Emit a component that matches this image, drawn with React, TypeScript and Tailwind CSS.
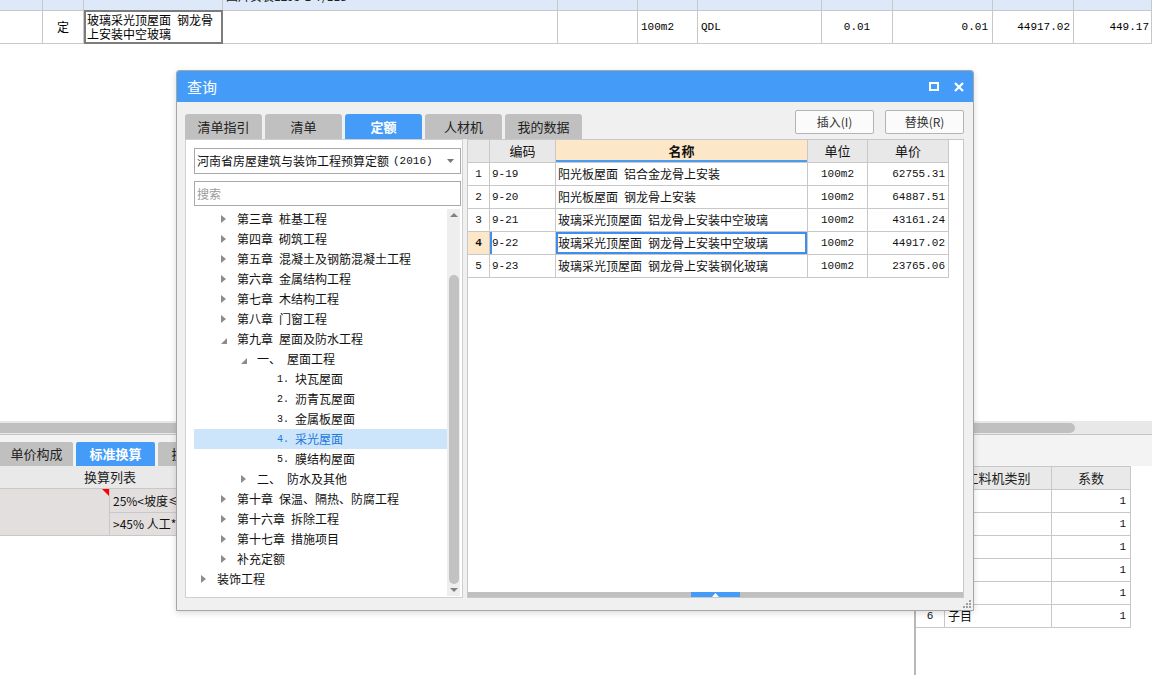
import type { ReactNode } from 'react';

const mono = "font-['Liberation_Mono','Noto_Sans_CJK_SC',monospace]";
const line = 'border-[#c8c8c8]';

function Spaced({ text }: { text: string }) {
  const parts = text.split(' ');
  return (
    <>
      {parts.map((p, i) => (
        <span key={i}>
          {i > 0 && <span className="inline-block w-[6px]" />}
          {p}
        </span>
      ))}
    </>
  );
}

type TreeNode = {
  level: number;
  state?: 'open' | 'closed';
  num?: string;
  text: string;
  selected?: boolean;
};

const tree: TreeNode[] = [
  { level: 1, state: 'closed', text: '第三章 桩基工程' },
  { level: 1, state: 'closed', text: '第四章 砌筑工程' },
  { level: 1, state: 'closed', text: '第五章 混凝土及钢筋混凝土工程' },
  { level: 1, state: 'closed', text: '第六章 金属结构工程' },
  { level: 1, state: 'closed', text: '第七章 木结构工程' },
  { level: 1, state: 'closed', text: '第八章 门窗工程' },
  { level: 1, state: 'open', text: '第九章 屋面及防水工程' },
  { level: 2, state: 'open', text: '一、 屋面工程' },
  { level: 3, num: '1.', text: '块瓦屋面' },
  { level: 3, num: '2.', text: '沥青瓦屋面' },
  { level: 3, num: '3.', text: '金属板屋面' },
  { level: 3, num: '4.', text: '采光屋面', selected: true },
  { level: 3, num: '5.', text: '膜结构屋面' },
  { level: 2, state: 'closed', text: '二、 防水及其他' },
  { level: 1, state: 'closed', text: '第十章 保温、隔热、防腐工程' },
  { level: 1, state: 'closed', text: '第十六章 拆除工程' },
  { level: 1, state: 'closed', text: '第十七章 措施项目' },
  { level: 1, state: 'closed', text: '补充定额' },
  { level: 0, state: 'closed', text: '装饰工程' },
];

const indent = ['w-[0px]', 'w-[20px]', 'w-[40px]', 'w-[60px]'];

const quotaRows = [
  { n: 1, code: '9-19', name: '阳光板屋面 铝合金龙骨上安装', unit: '100m2', price: '62755.31' },
  { n: 2, code: '9-20', name: '阳光板屋面 钢龙骨上安装', unit: '100m2', price: '64887.51' },
  { n: 3, code: '9-21', name: '玻璃采光顶屋面 铝龙骨上安装中空玻璃', unit: '100m2', price: '43161.24' },
  { n: 4, code: '9-22', name: '玻璃采光顶屋面 钢龙骨上安装中空玻璃', unit: '100m2', price: '44917.02', selected: true },
  { n: 5, code: '9-23', name: '玻璃采光顶屋面 钢龙骨上安装钢化玻璃', unit: '100m2', price: '23765.06' },
];

function Tri({ state }: { state?: 'open' | 'closed' }) {
  if (state === 'closed')
    return (
      <svg width="5" height="8" viewBox="0 0 5 8">
        <polygon points="0,0 5,4 0,8" fill="#8c8c8c" />
      </svg>
    );
  if (state === 'open')
    return (
      <svg width="6" height="6" viewBox="0 0 6 6" className="mt-[3px]">
        <polygon points="6,0 6,6 0,6" fill="#8c8c8c" />
      </svg>
    );
  return null;
}

function Cell({ className, children }: { className: string; children?: ReactNode }) {
  return <div className={`shrink-0 border-r ${line} flex items-center ${className}`}>{children}</div>;
}

function TopTable() {
  return (
    <div className="h-[421px]">
      <div className={`flex h-[11px] border-b ${line} bg-[#dde8f8] overflow-hidden`}>
        <Cell className="w-[43px]" />
        <Cell className="w-[41px]" />
        <Cell className="w-[139px]" />
        <div className={`w-[335px] border-r ${line} pl-[3px] overflow-hidden`}>
          <div className="-mt-[11px] leading-[14px] text-[12px] text-[#222] whitespace-nowrap">图片安装12J3-1-7/118</div>
        </div>
        <Cell className="w-[80px]" />
        <Cell className="w-[60px]" />
        <Cell className="w-[124px]" />
        <Cell className="w-[71px]" />
        <Cell className="w-[100px]" />
        <Cell className="w-[81px]" />
        <Cell className="w-[78px]" />
      </div>
      <div className={`flex h-[33px] border-b ${line} text-[12px] text-black`}>
        <Cell className="w-[43px]" />
        <Cell className="w-[41px] justify-center">定</Cell>
        <div className="shrink-0 w-[139px] border-2 border-[#7c7c7c] pl-[1px] leading-[14px] -mt-[1px] h-[34px] flex flex-col justify-center">
          <div>
            <Spaced text="玻璃采光顶屋面 钢龙骨" />
          </div>
          <div>上安装中空玻璃</div>
        </div>
        <Cell className="w-[335px]" />
        <Cell className="w-[80px]" />
        <Cell className={`w-[60px] pl-[3px] ${mono} text-[11px]`}>100m2</Cell>
        <Cell className={`w-[124px] pl-[3px] ${mono} text-[11px]`}>QDL</Cell>
        <Cell className={`w-[71px] justify-center ${mono} text-[11px]`}>0.01</Cell>
        <Cell className={`w-[100px] justify-end pr-[4px] ${mono} text-[11px]`}>0.01</Cell>
        <Cell className={`w-[81px] justify-end pr-[3px] ${mono} text-[11px]`}>44917.02</Cell>
        <Cell className={`w-[78px] justify-end pr-[2px] ${mono} text-[11px]`}>449.17</Cell>
      </div>
    </div>
  );
}

function BottomArea() {
  return (
    <div className="flex-1 flex flex-col">
      <div className="h-[14px] bg-[#e8e8e8] pt-[2px] border-b border-[#c4c4c4]">
        <div className="h-[10px] w-[1075px] rounded-r-[5px] bg-[#c0c0c0]" />
      </div>
      <div className="h-[31px] bg-[#f3f3f3] flex items-end gap-[3px] text-[13px]">
        <div className="w-[73px] h-[24px] bg-[#c0c0c0] rounded-tr-[2px] flex items-center justify-center text-[#222]">单价构成</div>
        <div className="w-[79px] h-[24px] bg-[#459cf8] rounded-t-[2px] flex items-center justify-center text-white font-bold">标准换算</div>
        <div className="w-[79px] h-[24px] bg-[#c0c0c0] rounded-t-[2px] flex items-center justify-center text-[#222]">换算信息</div>
      </div>
      <div className="flex-1 flex">
        <div className="w-[220px] shrink-0 text-[12px]">
          <div className={`h-[23px] bg-[#e9e9e9] border-b ${line} flex items-center justify-center text-[13px] text-[#222]`}>换算列表</div>
          <div className={`flex h-[47px] bg-[#e3dfde] border-b ${line}`}>
            <div className={`relative shrink-0 w-[110px] border-r ${line}`}>
              <svg width="7" height="7" viewBox="0 0 7 7" className="absolute right-0 top-0">
                <polygon points="0,0 7,0 7,7" fill="#ff0000" />
              </svg>
            </div>
            <div className="flex-1 min-w-0 flex flex-col">
              <div className={`h-[24px] border-b ${line} flex items-center pl-[3px] whitespace-nowrap overflow-hidden`}>25%&lt;坡度≤45% 人工*1.3</div>
              <div className="flex-1 flex items-center pl-[3px] whitespace-nowrap overflow-hidden">&gt;45% 人工*1.43</div>
            </div>
          </div>
        </div>
        <div className="flex-1" />
        <div className="w-[238px] shrink-0 border-l-2 border-[#b8b8b8] text-[12px]">
          <div className={`flex h-[24px] bg-[#e9e9e9] border-b border-t ${line} text-[13px] text-[#222] w-[215px]`}>
            <Cell className="w-[29px]" />
            <Cell className="w-[107px] justify-center">工料机类别</Cell>
            <Cell className="w-[79px] justify-center">系数</Cell>
          </div>
          {[1, 2, 3, 4, 5, 6].map((n) => (
            <div key={n} className={`flex h-[23px] border-b ${line} w-[215px] bg-white`}>
              <Cell className={`w-[29px] justify-center ${mono} text-[11px]`}>{n === 6 ? '6' : ''}</Cell>
              <Cell className="w-[107px] pl-[3px]">{n === 6 ? '子目' : ''}</Cell>
              <Cell className={`w-[79px] justify-end pr-[4px] ${mono} text-[11px]`}>1</Cell>
            </div>
          ))}
        </div>
      </div>
    </div>
  );
}

function QueryDialog() {
  const tabs = ['清单指引', '清单', '定额', '人材机', '我的数据'];
  return (
    <div className="absolute left-[176px] top-[70px] w-[798px] border border-[#a6a6a6] rounded-t-[3px] bg-[#f0f0f0] shadow-[0_2px_6px_rgba(0,0,0,0.15)]">
      {/* title */}
      <div className="h-[31px] bg-[#459cf8] rounded-t-[2px] flex items-center pl-[10px] pr-[9px] text-white">
        <span className="text-[15px] leading-none">查询</span>
        <div className="ml-auto flex items-center gap-[15px]">
          <svg width="10" height="9" viewBox="0 0 10 9">
            <rect x="1" y="1" width="8" height="7" fill="none" stroke="#fff" strokeWidth="2" />
          </svg>
          <svg width="10" height="10" viewBox="0 0 10 10">
            <path d="M1 1 L9 9 M9 1 L1 9" stroke="#fff" strokeWidth="2.2" />
          </svg>
        </div>
      </div>
      {/* tabs + buttons */}
      <div className="h-[37px] flex pl-[8px] pr-[9px]">
        <div className="flex gap-[3px] self-end">
          {tabs.map((t) => (
            <div
              key={t}
              className={
                t === '定额'
                  ? 'w-[77px] h-[25px] rounded-t-[3px] bg-[#459cf8] text-white font-bold text-[13px] flex items-center justify-center'
                  : 'w-[77px] h-[25px] rounded-t-[3px] bg-[#c0c0c0] text-[#222] text-[13px] flex items-center justify-center'
              }
            >
              {t}
            </div>
          ))}
        </div>
        <div className="ml-auto flex gap-[11px] mt-[8px] text-[12px] text-[#333]">
          <button className="w-[79px] h-[24px] bg-[#fbfbfb] border border-[#b4b4b4] rounded-[2px]">插入(I)</button>
          <button className="w-[79px] h-[24px] bg-[#fbfbfb] border border-[#b4b4b4] rounded-[2px]">替换(R)</button>
        </div>
      </div>
      {/* content */}
      <div className="flex gap-[4px] pl-[8px] pr-[9px] h-[459px]">
        {/* left */}
        <div className="w-[278px] shrink-0 bg-white border border-[#cfcfcf] pl-[8px] pt-[8px] flex flex-col">
          <div className="w-[267px] h-[26px] border border-[#a9a9a9] flex items-center pl-[2px] pr-[6px] text-[12px] text-[#111]">
            <span>河南省房屋建筑与装饰工程预算定额</span>
            <span className={`ml-[4px] ${mono} text-[11px]`}>(2016)</span>
            <svg width="7" height="4" viewBox="0 0 7 4" className="ml-auto">
              <polygon points="0,0 7,0 3.5,4" fill="#777" />
            </svg>
          </div>
          <div className="w-[267px] h-[25px] mt-[7px] border border-[#a9a9a9] flex items-center pl-[2px] text-[12px] text-[#9a9a9a]">搜索</div>
          <div className="mt-[3px] w-[266px] h-[387px] flex">
            <div className="flex-1 overflow-hidden text-[12px] text-[#111]">
              {tree.map((n, i) => (
                <div key={i} className={`h-[20px] flex items-center whitespace-nowrap ${n.selected ? 'bg-[#cce5fb] text-[#1a78e0]' : ''}`}>
                  <div className={indent[n.level]} />
                  <div className="w-[23px] pl-[7px] flex items-center">
                    <Tri state={n.state} />
                  </div>
                  {n.num && (
                    <>
                      <span className={`inline-block w-[12px] ${mono} text-[10px]`}>{n.num}</span>
                      <span className="inline-block w-[6px]" />
                    </>
                  )}
                  <Spaced text={n.text} />
                </div>
              ))}
            </div>
            <div className="w-[13px] bg-[#eeeeee] flex flex-col items-center">
              <svg width="8" height="4" viewBox="0 0 8 4" className="mt-[4px]">
                <polygon points="4,0 8,4 0,4" fill="#808080" />
              </svg>
              <div className="mt-[58px] w-[10px] h-[309px] rounded-[5px] bg-[#c2c2c2]" />
              <svg width="8" height="4" viewBox="0 0 8 4" className="mt-auto mb-[4px]">
                <polygon points="0,0 8,0 4,4" fill="#808080" />
              </svg>
            </div>
          </div>
        </div>
        {/* right */}
        <div className="w-[497px] shrink-0 bg-white border border-[#c8c8c8] flex flex-col">
          <div className="w-[481px] text-[12px] text-[#111]">
            <div className={`flex h-[23px] border-b ${line}`}>
              <Cell className="w-[22px] bg-[#e8e8e8]" />
              <Cell className="w-[66px] bg-[#e8e8e8] justify-center text-[13px]">编码</Cell>
              <div className="shrink-0 w-[252px] border-r border-[#c8c8c8] bg-[#fde7c9] shadow-[inset_0_-2px_0_#4a9cf0] flex items-center justify-center text-[13px] font-bold">名称</div>
              <Cell className="w-[60px] bg-[#e8e8e8] justify-center text-[13px]">单位</Cell>
              <Cell className="w-[81px] bg-[#e8e8e8] justify-center text-[13px]">单价</Cell>
            </div>
            {quotaRows.map((r) => (
              <div key={r.n} className={`flex h-[23px] border-b ${line}`}>
                <Cell className={`w-[22px] justify-center ${mono} text-[11px] ${r.selected ? 'bg-[#fde7c9] font-bold' : ''}`}>{r.n}</Cell>
                <Cell className={`w-[66px] pl-[2px] ${mono} text-[11px] ${r.selected ? 'shadow-[inset_2px_0_0_#3d8ef0]' : ''}`}>{r.code}</Cell>
                <Cell className={`w-[252px] pl-[2px] whitespace-nowrap ${r.selected ? 'shadow-[inset_0_0_0_2px_#3d8ef0]' : ''}`}>
                  <Spaced text={r.name} />
                </Cell>
                <Cell className={`w-[60px] justify-center ${mono} text-[11px]`}>{r.unit}</Cell>
                <Cell className={`w-[81px] justify-end pr-[3px] ${mono} text-[11px]`}>{r.price}</Cell>
              </div>
            ))}
          </div>
          <div className="mt-auto h-[5px] bg-[#c0c0c0] flex justify-center">
            <div className="w-[49px] h-[5px] bg-[#459cf8] flex items-center justify-center">
              <svg width="7" height="4" viewBox="0 0 7 4">
                <polygon points="3.5,0 7,4 0,4" fill="#fff" />
              </svg>
            </div>
          </div>
        </div>
      </div>
      {/* bottom / grip */}
      <div className="h-[12px] flex justify-end items-end pr-[2px] pb-[2px]">
        <svg width="9" height="9" viewBox="0 0 9 9">
          <rect x="7" y="1" width="2" height="2" fill="#a0a0a0" />
          <rect x="4" y="4" width="2" height="2" fill="#a0a0a0" />
          <rect x="7" y="4" width="2" height="2" fill="#a0a0a0" />
          <rect x="1" y="7" width="2" height="2" fill="#a0a0a0" />
          <rect x="4" y="7" width="2" height="2" fill="#a0a0a0" />
          <rect x="7" y="7" width="2" height="2" fill="#a0a0a0" />
        </svg>
      </div>
    </div>
  );
}

export default function App() {
  return (
    <div className="relative w-[1152px] h-[675px] overflow-hidden bg-white flex flex-col font-['Noto_Sans_CJK_SC',sans-serif] text-[#111]">
      <TopTable />
      <BottomArea />
      <QueryDialog />
    </div>
  );
}
